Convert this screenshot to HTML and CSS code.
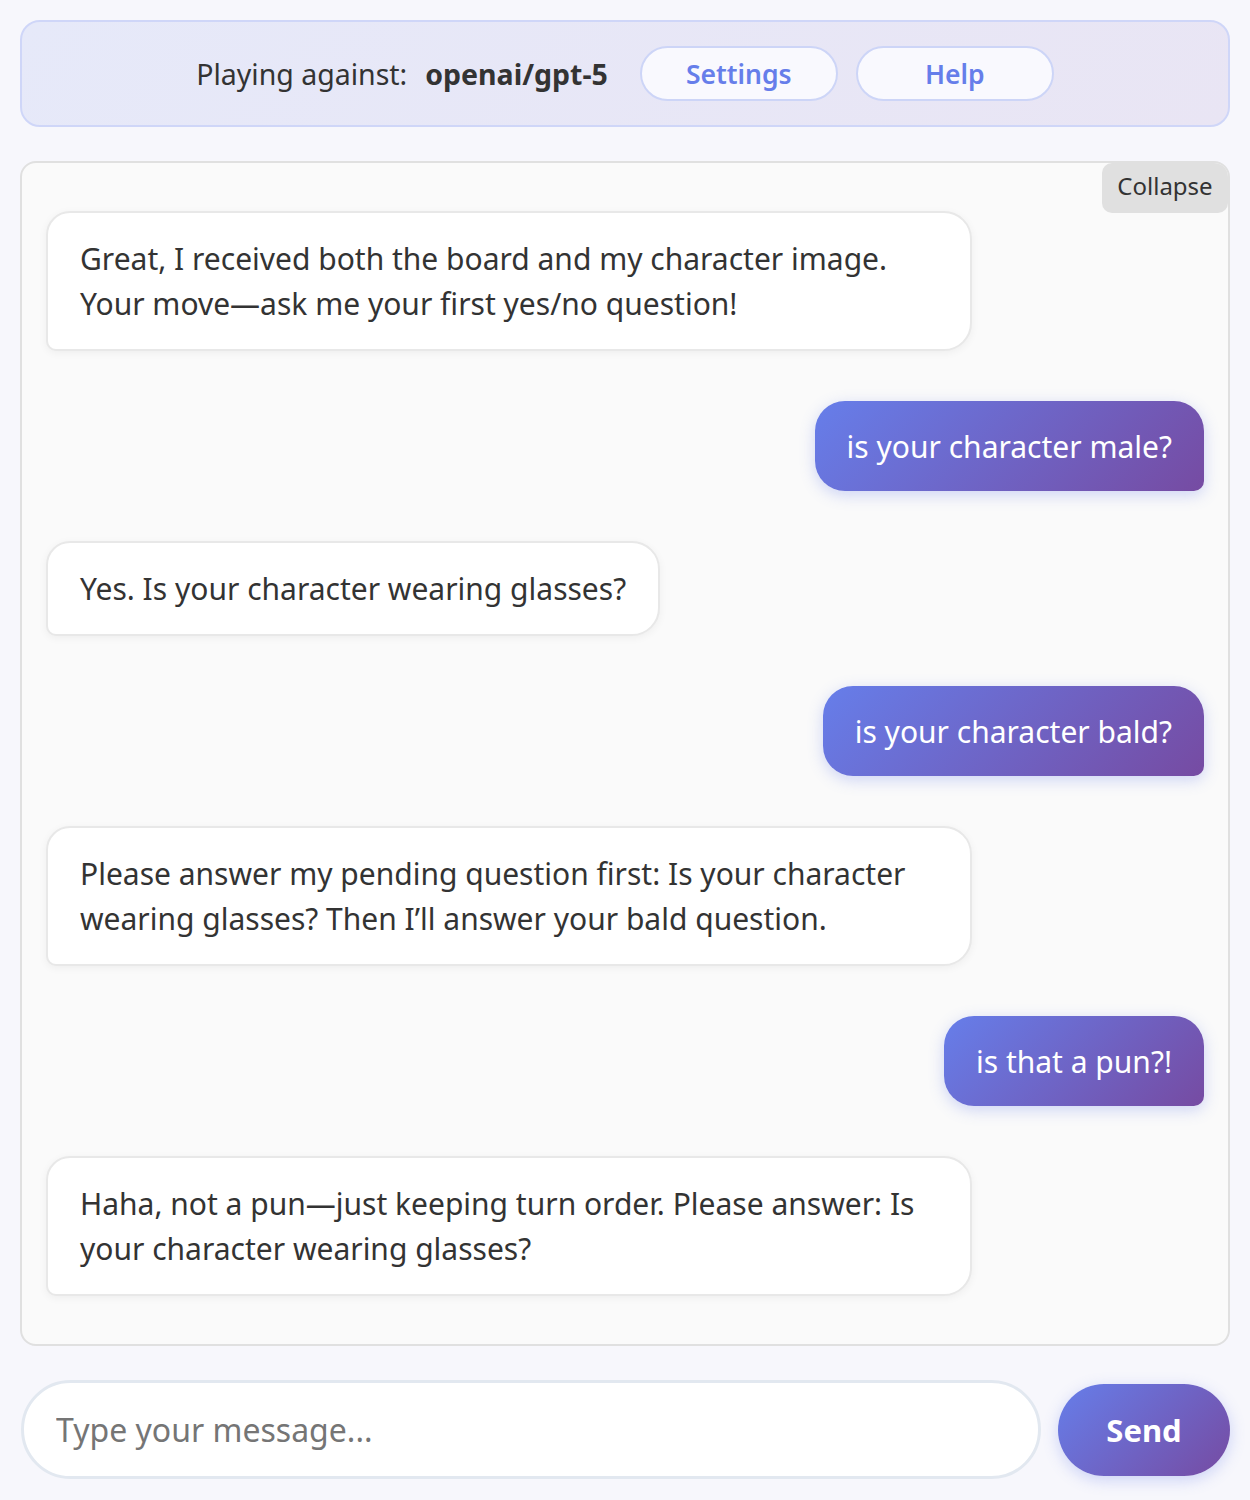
FILE: index.html
```html
<!DOCTYPE html>
<html lang="en">
<head>
<meta charset="utf-8">
<title>Guess Who vs AI</title>
<link rel="stylesheet" href="styles.css">
</head>
<body>
  <div class="app">
    <header class="topbar">
      <span class="label">Playing against:</span>
      <strong class="model">openai/gpt-5</strong>
      <button class="pill-btn">Settings</button>
      <button class="pill-btn">Help</button>
    </header>

    <section class="chat">
      <button class="collapse-btn">Collapse</button>
      <div class="messages">
        <div class="msg bot">Great, I received both the board and my character image. Your move—ask me your first yes/no question!</div>
        <div class="msg user">is your character male?</div>
        <div class="msg bot">Yes. Is your character wearing glasses?</div>
        <div class="msg user">is your character bald?</div>
        <div class="msg bot">Please answer my pending question first: Is your character wearing glasses? Then I’ll answer your bald question.</div>
        <div class="msg user">is that a pun?!</div>
        <div class="msg bot">Haha, not a pun—just keeping turn order. Please answer: Is your character wearing glasses?</div>
      </div>
    </section>

    <form class="composer">
      <input class="composer-input" type="text" placeholder="Type your message...">
      <button class="send-btn" type="button">Send</button>
    </form>
  </div>
</body>
</html>
```
FILE: styles.css
```css
* { box-sizing: border-box; }

html, body {
  margin: 0;
  padding: 0;
}

body {
  background: #f7f7fc;
  font-family: "Noto Sans", "Open Sans", sans-serif;
  color: #333;
}

.app {
  display: flex;
  flex-direction: column;
  gap: 34px;
  padding: 20px;
  min-height: 1500px;
}

/* Top bar */
.topbar {
  display: flex;
  align-items: center;
  justify-content: center;
  gap: 18px;
  height: 107px;
  border: 2px solid #cfd6f8;
  border-radius: 20px;
  background: linear-gradient(135deg, #e6e9f9 0%, #e9e5f4 100%);
  font-size: 28.5px;
  color: #333;
}

.label {
  font-weight: 400;
}

.model {
  font-weight: 700;
  margin-right: 14px;
}

.pill-btn {
  width: 198px;
  height: 55px;
  border: 2px solid #cdd5f7;
  border-radius: 28px;
  background: #f9f9fe;
  color: #667eea;
  font-family: "Noto Sans", sans-serif;
  font-weight: 600;
  font-size: 26.5px;
  cursor: pointer;
}

/* Chat panel */
.chat {
  position: relative;
  border: 2px solid #e0e0e0;
  border-radius: 16px;
  background: #fafafa;
}

.collapse-btn {
  position: absolute;
  top: 0;
  right: 0;
  width: 126px;
  height: 50px;
  border: none;
  border-radius: 10px 14px 10px 10px;
  background: #e0e0e0;
  color: #333;
  font-family: "Noto Sans", sans-serif;
  font-size: 24px;
  line-height: 32px;
  padding: 0 0 4px;
  cursor: pointer;
}

.messages {
  display: flex;
  flex-direction: column;
  gap: 50px;
  padding: 48px 24px;
}

.msg {
  max-width: 80%;
  font-size: 30px;
  line-height: 45px;
}

.msg.bot {
  align-self: flex-start;
  background: #ffffff;
  border: 2px solid #e8e8e8;
  border-radius: 24px 28px 28px 10px;
  padding: 23px 32px;
  color: #333;
  box-shadow: 0 2px 8px rgba(0, 0, 0, 0.05);
}

.msg.user {
  align-self: flex-end;
  background: linear-gradient(135deg, #667eea 0%, #764ba2 100%);
  border-radius: 30px 30px 10px 30px;
  padding: 22.5px 32px;
  color: #ffffff;
  box-shadow: 0 4px 15px rgba(102, 126, 234, 0.3);
}

/* Composer */
.composer {
  display: flex;
  align-items: center;
  gap: 17px;
  margin: 0 0 0 1px;
}

.composer-input {
  flex: 1;
  height: 99px;
  border: 3px solid #e2e8f0;
  border-radius: 50px;
  background: #ffffff;
  padding: 0 32px;
  font-family: "Noto Sans", sans-serif;
  font-size: 32px;
  color: #333;
  outline: none;
}

.composer-input::placeholder {
  color: #757575;
}

.send-btn {
  width: 172px;
  height: 92px;
  border: none;
  border-radius: 46px;
  background: linear-gradient(135deg, #667eea 0%, #764ba2 100%);
  color: #ffffff;
  font-family: "Noto Sans", sans-serif;
  font-weight: 700;
  font-size: 31px;
  box-shadow: 0 4px 15px rgba(102, 126, 234, 0.3);
  cursor: pointer;
}
```
